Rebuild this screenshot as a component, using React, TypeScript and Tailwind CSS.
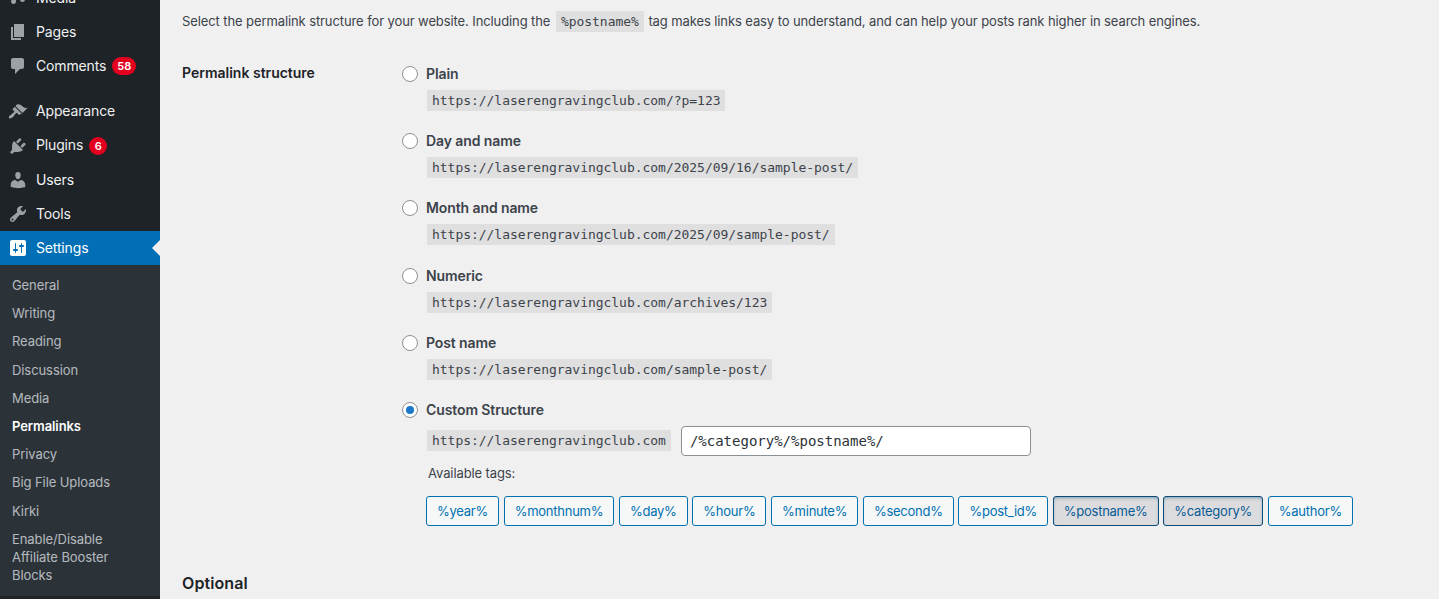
const MONO = "font-['DejaVu_Sans_Mono','Liberation_Mono',monospace]";

const icons: Record<string, string> = {
  media: "M17 -3v14.500c0 1.400-1.100 2.500-2.500 2.500S12 12.900 12 11.500 13.100 9 14.500 9c.17 0 .34.02.5.05V3.200L8 4.500v9C8 14.900 6.900 16 5.500 16S3 14.900 3 13.500 4.100 11 5.500 11c.17 0 .34.02.5.05V-3z",
  pages: "M6 15V2h10v13H6zm-1 1h8v2H3V5h2v11z",
  comments: "M5 2h9c1.100 0 2 .9 2 2v7c0 1.100-.9 2-2 2h-2l-5 5v-5H5c-1.100 0-2-.9-2-2V4c0-1.100.9-2 2-2z",
  appearance: "M14.480 11.060L7.410 3.990l1.500-1.500c.5-.56 2.300-.47 3.510.32 1.210.8 1.430 1.280 2.910 2.100 1.180.64 2.450 1.260 4.450.85zm-.71.71L6.700 4.700 4.930 6.470c-.39.39-.39 1.020 0 1.410l1.060 1.060c.39.39.39 1.030 0 1.420-.6.6-1.430 1.110-2.210 1.690-.35.26-.7.53-1.010.84C1.430 13.230.18 15.320 1.100 16.240c.92.92 3-.33 4.340-1.670.31-.31.58-.66.84-1.010.58-.78 1.090-1.610 1.690-2.210.39-.39 1.030-.39 1.420 0l1.060 1.060c.39.39 1.020.39 1.410 0z",
  plugins: "M13.110 4.360L9.870 7.600 8 5.730l3.240-3.240c.35-.34 1.050-.2 1.560.32.52.51.66 1.210.31 1.550zm-8 1.770l.91-1.120 9.010 9.010-1.190.84c-.71.71-2.630 1.160-3.820 1.160H6.140L4.900 17.260c-.59.59-1.540.59-2.120 0-.59-.58-.59-1.530 0-2.120l1.240-1.240v-3.880c0-1.130.4-3.190 1.090-3.890zm7.260 3.970l3.240-3.240c.34-.35 1.040-.21 1.550.31.52.51.66 1.210.31 1.550l-3.240 3.250z",
  users: "M10 9.250c-2.270 0-2.730-3.440-2.730-3.440C7 4.020 7.820 2 9.970 2c2.160 0 2.980 2.020 2.710 3.810 0 0-.41 3.440-2.680 3.440zm0 2.570L12.720 10c2.390 0 4.520 2.330 4.520 4.530v2.490s-3.650 1.130-7.240 1.130c-3.650 0-7.240-1.130-7.240-1.130v-2.490c0-2.250 1.940-4.480 4.470-4.480z",
  tools: "M16.680 9.770c-1.340 1.340-3.300 1.670-4.950.99l-5.410 6.520c-.99.99-2.590.99-3.580 0s-.99-2.590 0-3.570l6.520-5.420c-.68-1.650-.35-3.610.99-4.950 1.280-1.280 3.120-1.620 4.720-1.060l-2.890 2.890 2.820 2.820 2.860-2.870c.53 1.580.18 3.390-1.080 4.650zM3.810 16.210c.4.39 1.040.39 1.430 0 .4-.4.4-1.040 0-1.430-.39-.4-1.030-.4-1.430 0-.39.39-.39 1.030 0 1.430z",
  settings: "M18 16V4c0-1.100-.9-2-2-2H4c-1.100 0-2 .9-2 2v12c0 1.100.9 2 2 2h12c1.100 0 2-.9 2-2zM8 11h1c.55 0 1 .45 1 1s-.45 1-1 1H8v1.500c0 .28-.22.5-.5.5s-.5-.22-.5-.5V13H6c-.55 0-1-.45-1-1s.45-1 1-1h1V5.500c0-.28.22-.5.5-.5s.5.22.5.5V11zm5-2h-1c-.55 0-1-.45-1-1s.45-1 1-1h1V5.500c0-.28.22-.5.5-.5s.5.22.5.5V7h1c.55 0 1 .45 1 1s-.45 1-1 1h-1v5.500c0 .28-.22.5-.5.5s-.5-.22-.5-.5V9z",
};

function MenuItem({ icon, label, badge, current, shift }: { icon: string; label: string; badge?: string; current?: boolean; shift?: boolean }) {
  return (
    <div className={`relative flex h-[34px] items-center ${current ? "bg-[#006fb6] text-white" : "text-[#f0f0f1]"}`}>
      <svg viewBox="0 0 20 20" className={`ml-2 h-5 w-5 shrink-0 ${current ? "fill-white" : "fill-[#9ca1a6]"}`}>
        <path d={icons[icon]} />
      </svg>
      <span className={`ml-2 text-sm tracking-[-0.15px] ${shift ? "-mt-[2px]" : ""}`}>{label}</span>
      {badge && (
        <span className="ml-[6px] flex h-[18px] min-w-[18px] items-center justify-center rounded-full bg-[#e3001f] px-[5px] text-[11px] font-semibold text-white">
          {badge}
        </span>
      )}
      {current && (
        <span className="absolute right-0 top-[9px] h-0 w-0 border-y-[8px] border-r-[8px] border-y-transparent border-r-[#f0f0f1]" />
      )}
    </div>
  );
}

function SubItem({ label, active }: { label: string; active?: boolean }) {
  return (
    <div className={`px-3 py-[5px] text-[13px] leading-[18.2px] tracking-[-0.08px] ${active ? "font-semibold text-white" : "text-[#f0f6fcb3]"}`}>
      {label}
    </div>
  );
}

function Code({ children }: { children: string }) {
  return (
    <code className={`${MONO} inline-block bg-[#00000012] px-[5px] py-0 text-[13px] leading-[21px] tracking-[-0.03px] text-[#3c434a]`}>
      {children}
    </code>
  );
}

function Radio({ checked }: { checked?: boolean }) {
  return (
    <span className="flex h-4 w-4 shrink-0 items-center justify-center rounded-full border border-[#8c8f94] bg-white">
      {checked && <span className="h-2 w-2 rounded-full bg-[#1a78c8]" />}
    </span>
  );
}

function Option({ label, url }: { label: string; url: string }) {
  return (
    <div className="h-[67.2px]">
      <div className="flex h-5 items-center gap-2">
        <Radio />
        <span className="text-sm font-semibold tracking-[-0.1px] text-[#3c434a]">{label}</span>
      </div>
      <div className="ml-[25px] mt-[6px]">
        <Code>{url}</Code>
      </div>
    </div>
  );
}

const tags = ["%year%", "%monthnum%", "%day%", "%hour%", "%minute%", "%second%", "%post_id%", "%postname%", "%category%", "%author%"];
const activeTags = ["%postname%", "%category%"];

export default function App() {
  return (
    <div className="flex h-[599px] w-full overflow-hidden bg-[#f0f0f1] font-['Inter','Liberation_Sans',sans-serif]">
      <aside className="w-40 shrink-0 overflow-hidden bg-[#1d2327]">
        <div className="-mt-[19px]">
          <MenuItem icon="media" label="Media" />
          <MenuItem icon="pages" label="Pages" />
          <MenuItem icon="comments" label="Comments" badge="58" />
          <div className="h-3" />
          <MenuItem icon="appearance" label="Appearance" shift />
          <MenuItem icon="plugins" label="Plugins" badge="6" shift />
          <MenuItem icon="users" label="Users" />
          <MenuItem icon="tools" label="Tools" />
          <MenuItem icon="settings" label="Settings" current />
          <div className="bg-[#2c3338] pb-[7px] pt-[6px]">
            <SubItem label="General" />
            <SubItem label="Writing" />
            <SubItem label="Reading" />
            <SubItem label="Discussion" />
            <SubItem label="Media" />
            <SubItem label="Permalinks" active />
            <SubItem label="Privacy" />
            <SubItem label="Big File Uploads" />
            <SubItem label="Kirki" />
            <SubItem label="Enable/Disable Affiliate Booster Blocks" />
          </div>
        </div>
      </aside>
      <main className="min-w-0 flex-1 pl-[22px] pt-[11px] text-[13px] text-[#3c434a]">
        <p className="flex h-[21px] items-center whitespace-pre tracking-[-0.1px]">
          <span>Select the permalink structure for your website. Including the </span>
          <span className="ml-[2px] mr-[1px]"><Code>%postname%</Code></span>
          <span> tag makes links easy to understand, and can help your posts rank higher in search engines.</span>
        </p>
        <div className="mt-[32px] flex">
          <div className="w-[220px] shrink-0 text-sm font-semibold leading-[18px] text-[#1d2327]">Permalink structure</div>
          <div className="min-w-0 flex-1">
            <Option label="Plain" url="https://laserengravingclub.com/?p=123" />
            <Option label="Day and name" url="https://laserengravingclub.com/2025/09/16/sample-post/" />
            <Option label="Month and name" url="https://laserengravingclub.com/2025/09/sample-post/" />
            <Option label="Numeric" url="https://laserengravingclub.com/archives/123" />
            <Option label="Post name" url="https://laserengravingclub.com/sample-post/" />
            <div className="flex h-5 items-center gap-2">
              <Radio checked />
              <span className="text-sm font-semibold tracking-[-0.1px] text-[#3c434a]">Custom Structure</span>
            </div>
            <div className="ml-[25px] mt-[6px] flex items-center gap-[10px]">
              <Code>https://laserengravingclub.com</Code>
              <input
                readOnly
                value="/%category%/%postname%/"
                className={`${MONO} h-[30px] w-[350px] rounded border border-[#8c8f94] bg-white px-2 text-sm text-[#2c3338] outline-none`}
              />
            </div>
            <div className="ml-[26px] mt-[8px] leading-[18px] tracking-[-0.1px]">Available tags:</div>
            <div className="ml-[24px] mt-[14px] flex gap-[4.7px]">
              {tags.map((t) => (
                <span
                  key={t}
                  className={`flex h-[30px] items-center rounded-[3px] border px-[10px] pt-px text-[13px] tracking-[-0.25px] ${
                    activeTags.includes(t)
                      ? "border-[#0a4b78] bg-[#dcdcde] text-[#0a5a94] shadow-[inset_0_2px_5px_-3px_#0a4b78]"
                      : "border-[#0071b1] bg-[#f6f7f7] text-[#0071b1]"
                  }`}
                >
                  {t}
                </span>
              ))}
            </div>
          </div>
        </div>
        <h2 className="mt-[45px] text-base font-semibold tracking-[0.1px] text-[#1d2327]">Optional</h2>
      </main>
    </div>
  );
}
